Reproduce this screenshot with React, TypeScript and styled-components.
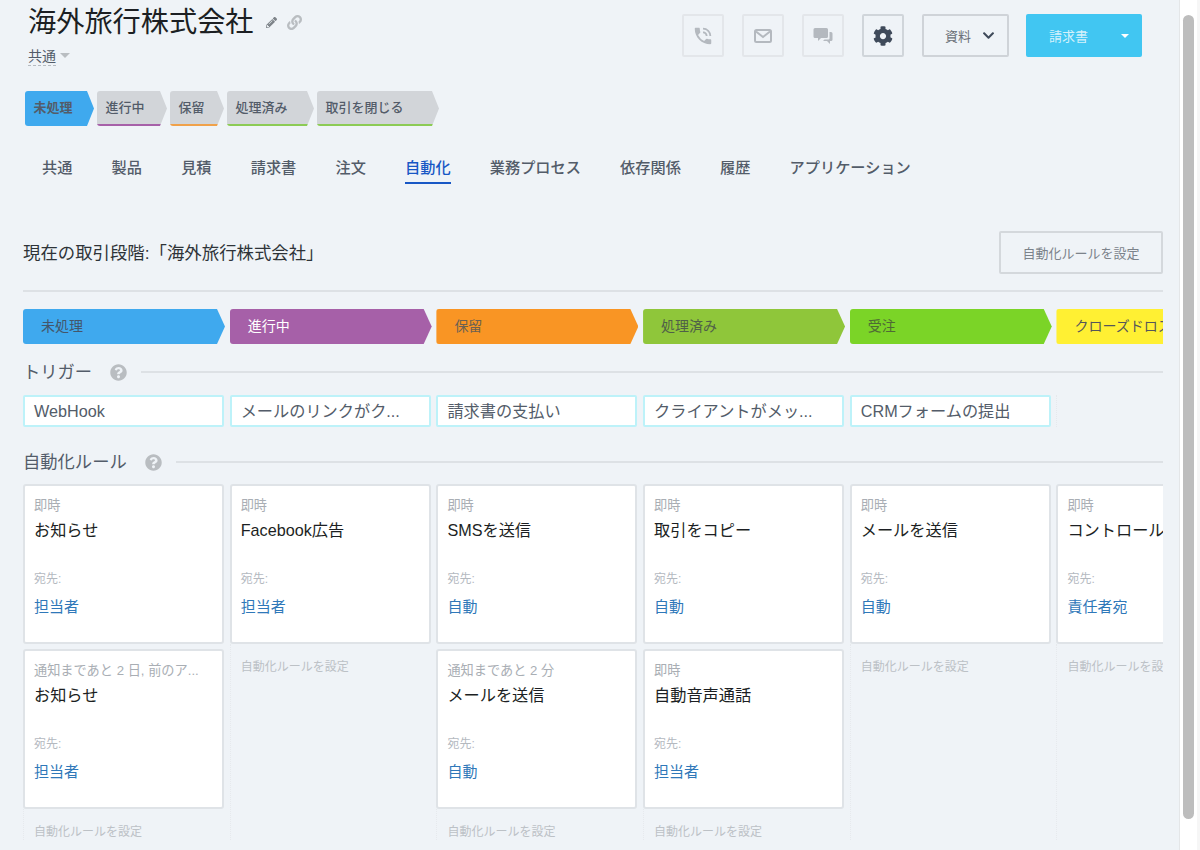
import styled, { createGlobalStyle } from "styled-components";
import { FaChevronDown, FaCog, FaLink, FaPencilAlt, FaQuestionCircle } from "react-icons/fa";
import { MdPhoneInTalk } from "react-icons/md";

const FONT = `"Liberation Sans", "Noto Sans CJK JP", sans-serif`;

const dealStages = [
  { label: "未処理", active: true, line: "#3fa9ee", width: 69 },
  { label: "進行中", active: false, line: "#a660a8", width: 70 },
  { label: "保留", active: false, line: "#f0a14a", width: 54 },
  { label: "処理済み", active: false, line: "#8ccb55", width: 87 },
  { label: "取引を閉じる", active: false, line: "#8ccb55", width: 122 },
];

const tabs = ["共通", "製品", "見積", "請求書", "注文", "自動化", "業務プロセス", "依存関係", "履歴", "アプリケーション"];

const pipeline = [
  { label: "未処理", bg: "#3fa9ee", fg: "#44566a" },
  { label: "進行中", bg: "#a660a8", fg: "#ffffff" },
  { label: "保留", bg: "#f99524", fg: "#6b6152" },
  { label: "処理済み", bg: "#8fc63a", fg: "#4f6048" },
  { label: "受注", bg: "#7bd427", fg: "#4f6a35" },
  { label: "クローズドロスト", bg: "#fff033", fg: "#55565a" },
];

const triggers = ["WebHook", "メールのリンクがク...", "請求書の支払い", "クライアントがメッ...", "CRMフォームの提出", ""];

type Rule = { when: string; title: string; to: string };

const ruleColumns: { rules: Rule[] }[] = [
  {
    rules: [
      { when: "即時", title: "お知らせ", to: "担当者" },
      { when: "通知まであと 2 日, 前のア...", title: "お知らせ", to: "担当者" },
    ],
  },
  { rules: [{ when: "即時", title: "Facebook広告", to: "担当者" }] },
  {
    rules: [
      { when: "即時", title: "SMSを送信", to: "自動" },
      { when: "通知まであと 2 分", title: "メールを送信", to: "自動" },
    ],
  },
  {
    rules: [
      { when: "即時", title: "取引をコピー", to: "自動" },
      { when: "即時", title: "自動音声通話", to: "担当者" },
    ],
  },
  { rules: [{ when: "即時", title: "メールを送信", to: "自動" }] },
  { rules: [{ when: "即時", title: "コントロール", to: "責任者宛" }] },
];

const GlobalStyle = createGlobalStyle`
  html, body {
    margin: 0;
    height: 100%;
    overflow: hidden;
    background: #eff3f7;
  }
  * {
    box-sizing: border-box;
  }
`;

const MailIcon = () => (
  <svg width="18" height="14" viewBox="0 0 18 14" fill="none" stroke="currentColor" strokeWidth="2">
    <rect x="1" y="1" width="16" height="12" rx="1.5" />
    <path d="M2 2.5l7 5.5 7-5.5" />
  </svg>
);

const ChatIcon = () => (
  <svg width="20" height="18" viewBox="0 0 20 18" fill="currentColor">
    <path d="M2 1h11.5A1.5 1.5 0 0 1 15 2.500v7a1.500 1.500 0 0 1-1.500 1.500H8l-3 3v-3H2a1.500 1.500 0 0 1-1.500-1.500v-7A1.500 1.500 0 0 1 2 1z" />
    <path d="M16.500 5H18a1.500 1.500 0 0 1 1.500 1.500v6A1.500 1.500 0 0 1 18 14h-1v3l-3-3h-4l1.500-1.500h4a1 1 0 0 0 1-1z" />
  </svg>
);

const App = () => {
  return (
    <>
      <GlobalStyle />
      <Page>
        <Main>
          <Header>
            <div>
              <TitleRow>
                <Title>海外旅行株式会社</Title>
                <EditIcon />
                <LinkIcon />
              </TitleRow>
              <Category>
                <CategoryName>共通</CategoryName>
                <Caret />
              </Category>
            </div>
            <Actions>
              <IconButton>
                <MdPhoneInTalk size={22} />
              </IconButton>
              <IconButton>
                <MailIcon />
              </IconButton>
              <IconButton>
                <ChatIcon />
              </IconButton>
              <IconButton $strong>
                <FaCog size={20} />
              </IconButton>
              <DocsButton>
                資料
                <FaChevronDown size={13} color="#3f4a5a" />
              </DocsButton>
              <InvoiceButton>
                請求書
                <InvoiceCaret />
              </InvoiceButton>
            </Actions>
          </Header>

          <DealStages>
            {dealStages.map((stage) => (
              <DealStage key={stage.label} $active={stage.active} $line={stage.line} $width={stage.width}>
                {stage.label}
              </DealStage>
            ))}
          </DealStages>

          <Tabs>
            {tabs.map((tab) => (
              <Tab key={tab} $active={tab === "自動化"}>
                {tab}
              </Tab>
            ))}
          </Tabs>

          <CurrentRow>
            <CurrentLabel>現在の取引段階:「海外旅行株式会社」</CurrentLabel>
            <SetupButton>自動化ルールを設定</SetupButton>
          </CurrentRow>

          <Board>
            <Columns>
              {pipeline.map((step) => (
                <PipelineStep key={step.label} $bg={step.bg} $fg={step.fg}>
                  {step.label}
                </PipelineStep>
              ))}
            </Columns>

            <SectionHead $top={16} $bottom={11}>
              <SectionTitle>トリガー</SectionTitle>
              <HelpIcon />
              <SectionLine />
            </SectionHead>
            <Columns>
              {triggers.map((trigger, index) =>
                trigger ? <TriggerChip key={trigger}>{trigger}</TriggerChip> : <EmptyChip key={index} />,
              )}
            </Columns>

            <SectionHead $top={23} $bottom={10}>
              <SectionTitle>自動化ルール</SectionTitle>
              <HelpIcon />
              <SectionLine />
            </SectionHead>
            <Columns>
              {ruleColumns.map((column, index) => (
                <RuleColumn key={index}>
                  {column.rules.map((rule) => (
                    <RuleCard key={rule.title + rule.when}>
                      <RuleWhen>{rule.when}</RuleWhen>
                      <RuleTitle>{rule.title}</RuleTitle>
                      <RuleToLabel>宛先:</RuleToLabel>
                      <RuleTo>{rule.to}</RuleTo>
                    </RuleCard>
                  ))}
                  <AddRule>自動化ルールを設定</AddRule>
                </RuleColumn>
              ))}
            </Columns>
          </Board>
        </Main>
        <ScrollTrack>
          <ScrollThumb />
        </ScrollTrack>
      </Page>
    </>
  );
};

const Page = styled.div`
  display: flex;
  width: 1200px;
  height: 850px;
  overflow: hidden;
  font-family: ${FONT};
  color: #333;
`;

const Main = styled.main`
  width: 1179px;
  flex: none;
  padding: 0 16px 0 23px;
`;

const Header = styled.header`
  display: flex;
  justify-content: space-between;
  align-items: flex-start;
  height: 91px;
  padding: 6px 21px 0 5px;
`;

const TitleRow = styled.div`
  display: flex;
  align-items: center;
  height: 32px;
`;

const Title = styled.h1`
  margin: 0;
  font-size: 28.2px;
  line-height: 32px;
  font-weight: 400;
  color: #1c1f23;
`;

const EditIcon = styled(FaPencilAlt)`
  margin-left: 12px;
  font-size: 11px;
  color: #7d8389;
`;

const LinkIcon = styled(FaLink)`
  margin-left: 10px;
  font-size: 15px;
  color: #b9bdc1;
`;

const Category = styled.div`
  display: flex;
  align-items: center;
  gap: 4px;
  margin-top: 9px;
`;

const CategoryName = styled.span`
  font-size: 14px;
  line-height: 18px;
  color: #535c69;
  border-bottom: 1px dashed #b6bbc1;
`;

const Caret = styled.span`
  width: 0;
  height: 0;
  margin-bottom: 2px;
  border-left: 5px solid transparent;
  border-right: 5px solid transparent;
  border-top: 5px solid #b9bdc1;
`;

const Actions = styled.div`
  display: flex;
  align-items: center;
  margin-top: 8px;
`;

const IconButton = styled.div<{ $strong?: boolean }>`
  display: flex;
  align-items: center;
  justify-content: center;
  width: 42px;
  height: 43px;
  margin-right: 18px;
  border: 2px solid ${({ $strong }) => ($strong ? "#d0d5da" : "#e3e6ea")};
  border-radius: 2px;
  color: ${({ $strong }) => ($strong ? "#3f4a5a" : "#b4b9bf")};
`;

const DocsButton = styled.div`
  display: flex;
  align-items: center;
  justify-content: flex-end;
  gap: 11px;
  width: 87px;
  height: 43px;
  padding-right: 12px;
  border: 2px solid #cfd3d8;
  border-radius: 2px;
  font-size: 13px;
  color: #6a7078;
`;

const InvoiceButton = styled.div`
  display: flex;
  align-items: center;
  justify-content: space-between;
  width: 116px;
  height: 43px;
  margin-left: 17px;
  padding: 0 13px 0 23px;
  background: #41c6f2;
  border-radius: 2px;
  font-size: 13px;
  color: #d4f1fb;
`;

const InvoiceCaret = styled.span`
  width: 0;
  height: 0;
  border-left: 4px solid transparent;
  border-right: 4px solid transparent;
  border-top: 4px solid #ffffff;
`;

const DealStages = styled.div`
  display: flex;
  gap: 3px;
  padding-left: 2px;
`;

const DealStage = styled.div<{ $active: boolean; $line: string; $width: number }>`
  flex: none;
  width: ${({ $width }) => $width}px;
  height: 35px;
  padding-left: 8.500px;
  background: linear-gradient(
    to bottom,
    ${({ $active }) => ($active ? "#3fa9ee" : "#d2d5d9")} 33px,
    ${({ $line }) => $line} 33px
  );
  border-radius: 3px;
  clip-path: polygon(0 0, calc(100% - 7px) 0, 100% 50%, calc(100% - 7px) 100%, 0 100%);
  font-size: 13px;
  font-weight: ${({ $active }) => ($active ? 700 : 500)};
  line-height: 33px;
  color: #535c69;
  white-space: nowrap;
`;

const Tabs = styled.nav`
  display: flex;
  gap: 39.200px;
  padding: 32px 0 0 19px;
`;

const Tab = styled.div<{ $active: boolean }>`
  height: 26px;
  font-size: 15.200px;
  font-weight: 500;
  line-height: 20px;
  color: ${({ $active }) => ($active ? "#1857c5" : "#535c69")};
  border-bottom: 2px solid ${({ $active }) => ($active ? "#1857c5" : "transparent")};
`;

const CurrentRow = styled.div`
  display: flex;
  justify-content: space-between;
  align-items: center;
  height: 60px;
  margin-top: 48px;
  padding-bottom: 17px;
  border-bottom: 2px solid #dde1e5;
`;

const CurrentLabel = styled.h2`
  margin: 0 0 2px;
  font-size: 17.400px;
  font-weight: 400;
  color: #2e3338;
`;

const SetupButton = styled.div`
  display: flex;
  align-items: center;
  justify-content: center;
  width: 164px;
  height: 43px;
  border: 2px solid #d4d8dc;
  border-radius: 2px;
  font-size: 13px;
  color: #7c838b;
`;

const Board = styled.section`
  padding-top: 17px;
  overflow: hidden;
`;

const Columns = styled.div`
  display: flex;
  gap: 5.700px;
  width: 1260px;
`;

const PipelineStep = styled.div<{ $bg: string; $fg: string }>`
  flex: none;
  width: 202px;
  margin-right: -1px;
  height: 35px;
  padding-left: 18px;
  background: ${({ $bg }) => $bg};
  border-radius: 3px;
  clip-path: polygon(0 0, 194px 0, 202px 50%, 194px 100%, 0 100%);
  font-size: 14px;
  line-height: 35px;
  color: ${({ $fg }) => $fg};
  white-space: nowrap;
`;

const SectionHead = styled.div<{ $top: number; $bottom: number }>`
  display: flex;
  align-items: center;
  width: 1140px;
  height: 24px;
  margin-top: ${({ $top }) => $top}px;
  margin-bottom: ${({ $bottom }) => $bottom}px;
`;

const SectionTitle = styled.h3`
  margin: 0;
  font-size: 17.300px;
  font-weight: 400;
  line-height: 24px;
  color: #535c69;
`;

const HelpIcon = styled(FaQuestionCircle)`
  margin: 1px 0 0 18px;
  font-size: 17px;
  color: #b9bdc1;
`;

const SectionLine = styled.div`
  flex: 1;
  height: 2px;
  margin: 0 0 1px 14px;
  background: #dde1e5;
`;

const TriggerChip = styled.div`
  flex: none;
  width: 201px;
  height: 32px;
  padding-left: 9px;
  background: #ffffff;
  border: 2px solid #bdf2f9;
  border-radius: 2px;
  font-size: 16.200px;
  line-height: 28px;
  color: #535c69;
  white-space: nowrap;
  overflow: hidden;
`;

const EmptyChip = styled.div`
  flex: none;
  width: 201px;
  height: 32px;
  border-left: 1px dotted #e6e9ed;
`;

const RuleColumn = styled.div`
  flex: none;
  width: 201px;
  display: flex;
  flex-direction: column;
  gap: 5px;
`;

const RuleCard = styled.article`
  height: 160px;
  padding: 11px 8px 0 9px;
  background: #ffffff;
  border: 2px solid #dfe3e7;
  border-radius: 3px;
`;

const RuleWhen = styled.div`
  font-size: 13.200px;
  line-height: 18px;
  color: #a9aeb4;
  white-space: nowrap;
`;

const RuleTitle = styled.div`
  margin-top: 4px;
  font-size: 16.200px;
  line-height: 22px;
  color: #1c1f23;
  white-space: nowrap;
`;

const RuleToLabel = styled.div`
  margin-top: 30px;
  font-size: 12px;
  line-height: 16px;
  color: #b4b9bf;
`;

const RuleTo = styled.div`
  margin-top: 9px;
  font-size: 15px;
  line-height: 22px;
  color: #2f78b9;
`;

const AddRule = styled.div`
  flex: 1;
  margin-top: -5px;
  padding: 15px 0 0 10px;
  border-left: 1px dotted #e6e9ed;
  font-size: 12px;
  line-height: 16px;
  color: #bcc1c6;
  white-space: nowrap;
`;

const ScrollTrack = styled.aside`
  flex: 1;
  padding: 15px 0 0 3px;
  background: linear-gradient(to right, #ffffff 17px, #f6f6f6 17px);
  border-left: 1px solid #e4e6e8;
`;

const ScrollThumb = styled.div`
  width: 11px;
  height: 804px;
  background: #bdbdbd;
  border-radius: 6px;
`;

export default App;
